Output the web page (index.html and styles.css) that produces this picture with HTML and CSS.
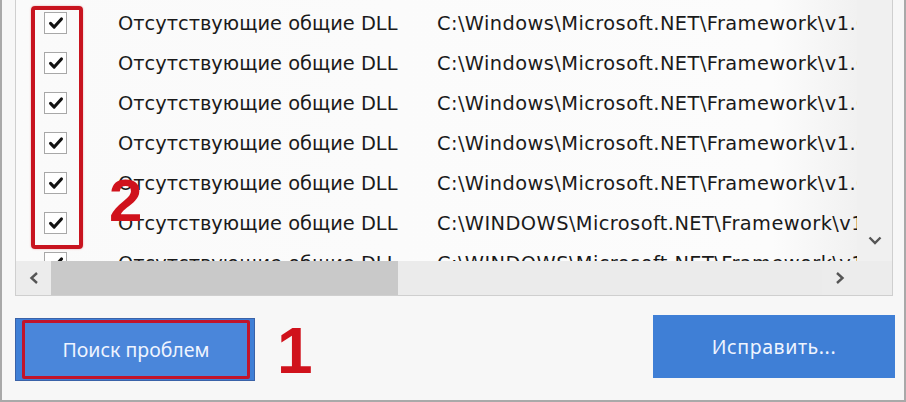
FILE: index.html
```html
<!DOCTYPE html>
<html lang="ru">
<head>
<meta charset="utf-8">
<title>Поиск проблем</title>
<link rel="stylesheet" href="styles.css">
</head>
<body>
<div class="window">
  <div class="list">
    <div class="rows">
      <div class="row"><span class="cb"><svg viewBox="0 0 22 22"><path d="M5 11.5 L9 15.5 L17 6.5"/></svg></span><span class="name">Отсутствующие общие DLL</span><span class="path">C:\Windows\Microsoft.NET\Framework\v1.0.3705\mscorlib.dll</span></div>
      <div class="row"><span class="cb"><svg viewBox="0 0 22 22"><path d="M5 11.5 L9 15.5 L17 6.5"/></svg></span><span class="name">Отсутствующие общие DLL</span><span class="path">C:\Windows\Microsoft.NET\Framework\v1.0.3705\System.dll</span></div>
      <div class="row"><span class="cb"><svg viewBox="0 0 22 22"><path d="M5 11.5 L9 15.5 L17 6.5"/></svg></span><span class="name">Отсутствующие общие DLL</span><span class="path">C:\Windows\Microsoft.NET\Framework\v1.0.3705\System.Data.dll</span></div>
      <div class="row"><span class="cb"><svg viewBox="0 0 22 22"><path d="M5 11.5 L9 15.5 L17 6.5"/></svg></span><span class="name">Отсутствующие общие DLL</span><span class="path">C:\Windows\Microsoft.NET\Framework\v1.0.3705\System.Xml.dll</span></div>
      <div class="row"><span class="cb"><svg viewBox="0 0 22 22"><path d="M5 11.5 L9 15.5 L17 6.5"/></svg></span><span class="name">Отсутствующие общие DLL</span><span class="path">C:\Windows\Microsoft.NET\Framework\v1.0.3705\System.Web.dll</span></div>
      <div class="row"><span class="cb"><svg viewBox="0 0 22 22"><path d="M5 11.5 L9 15.5 L17 6.5"/></svg></span><span class="name">Отсутствующие общие DLL</span><span class="path">C:\WINDOWS\Microsoft.NET\Framework\v1.1.4322\mscorlib.dll</span></div>
      <div class="row"><span class="cb"><svg viewBox="0 0 22 22"><path d="M5 11.5 L9 15.5 L17 6.5"/></svg></span><span class="name">Отсутствующие общие DLL</span><span class="path">C:\WINDOWS\Microsoft.NET\Framework\v1.1.4322\System.dll</span></div>
    </div>
    <div class="vscroll">
      <svg class="arrow-down" viewBox="0 0 14 9"><path d="M1.5 1.5 L7 7 L12.5 1.5"/></svg>
    </div>
    <div class="hscroll">
      <div class="hbtn"><svg viewBox="0 0 9 12"><path d="M7.5 1 L2 6 L7.5 11"/></svg></div>
      <div class="track"><div class="thumb"></div></div>
      <div class="hbtn"><svg viewBox="0 0 9 12"><path d="M1.5 1 L7 6 L1.5 11"/></svg></div>
    </div>
    <div class="corner"></div>
    <div class="mark-box"></div>
    <div class="mark-num two">2</div>
  </div>
  <div class="actions">
    <div class="left-group">
      <button class="btn btn-scan"><span class="btn-inner">Поиск проблем</span></button>
      <span class="mark-num one">1</span>
    </div>
    <button class="btn btn-fix">Исправить...</button>
  </div>
</div>
</body>
</html>
```
FILE: styles.css
```css
* { box-sizing: border-box; }
html, body { margin: 0; padding: 0; }
body {
  width: 906px;
  height: 402px;
  overflow: hidden;
  background: #f6f6f6;
  font-family: "DejaVu Sans", Verdana, sans-serif;
}
.window {
  width: 906px;
  height: 402px;
  border-left: 2px solid #a9a9a9;
  border-right: 2px solid #a9a9a9;
  border-bottom: 2px solid #a9a9a9;
  background: #f7f7f7;
  padding: 0 0 0 13px;
}
.list {
  position: relative;
  width: 878px;
  height: 296px;
  border: 1px solid #cfcfcf;
  border-top: none;
  background: #fbfbfb;
  display: grid;
  grid-template-columns: 841px 35px;
  grid-template-rows: 261px 34px;
}
.rows {
  overflow: hidden;
  padding-top: 3px;
  background: linear-gradient(to right, #fafafa 0%, #fcfcfc 90%, #f1f1f1 100%);
}
.row {
  height: 40px;
  display: grid;
  grid-template-columns: 102px 319px 1fr;
  align-items: center;
  white-space: nowrap;
  font-size: 19.4px;
  color: #1a1a1a;
}
.cb {
  margin-left: 28px;
  width: 23px;
  height: 22px;
  border: 1px solid #a8a8a8;
  background: #fff;
  display: flex;
  align-items: center;
  justify-content: center;
}
.cb svg { width: 20px; height: 20px; }
.cb path { fill: none; stroke: #111; stroke-width: 3.4; stroke-linecap: round; stroke-linejoin: round; }
.name, .path { overflow: hidden; }
.path { letter-spacing: 0.42px; }
.vscroll {
  grid-row: 1;
  grid-column: 2;
  background: #f0f0f0;
  position: relative;
}
.arrow-down {
  position: absolute;
  left: 11px;
  bottom: 16px;
  width: 14px;
  height: 9px;
}
.arrow-down path, .hbtn path { fill: none; stroke: #555; stroke-width: 2.4; }
.hscroll {
  grid-row: 2;
  grid-column: 1;
  display: grid;
  grid-template-columns: 35px 1fr 35px;
  background: #ebebeb;
}
.hbtn {
  display: flex;
  align-items: center;
  justify-content: center;
  background: #ececec;
}
.hbtn svg { width: 10px; height: 12px; }
.track { position: relative; background: #ebebeb; }
.thumb {
  width: 347px;
  height: 100%;
  background: #c9c9c9;
}
.corner { grid-row: 2; grid-column: 2; background: #ececec; }
.mark-box {
  position: absolute;
  left: 15px;
  top: 6px;
  width: 52px;
  height: 243px;
  border: 4px solid #c8141f;
  border-radius: 4px;
  box-shadow: 0 0 2px rgba(200, 20, 31, 0.4);
}
.mark-num {
  font-family: "Liberation Sans", Arial, sans-serif;
  font-weight: bold;
  color: #d0121c;
  line-height: 1;
}
.two {
  position: absolute;
  left: 93px;
  top: 171px;
  font-size: 60px;
}
.actions {
  display: flex;
  justify-content: space-between;
  align-items: flex-start;
  padding: 19px 9px 0 0;
}
.left-group { display: flex; align-items: center; gap: 22px; }
.btn {
  border: none;
  height: 63px;
  color: #eef4ff;
  font-family: "Noto Sans", "Open Sans", sans-serif;
  font-size: 19.5px;
  background: #3f7fd6;
  padding: 0;
  cursor: pointer;
}
.btn-scan {
  width: 240px;
  border: 1px solid #3a62a8;
  padding: 1px 4px 1px 6px;
  display: flex;
}
.btn-inner {
  flex: 1;
  display: flex;
  align-items: center;
  justify-content: center;
  border: 3px solid #c2142a;
  border-radius: 2px;
  background: #4a86da;
}
.one { font-size: 64px; margin-top: 4px; }
.btn-fix { width: 242px; letter-spacing: 0.6px; }
```
